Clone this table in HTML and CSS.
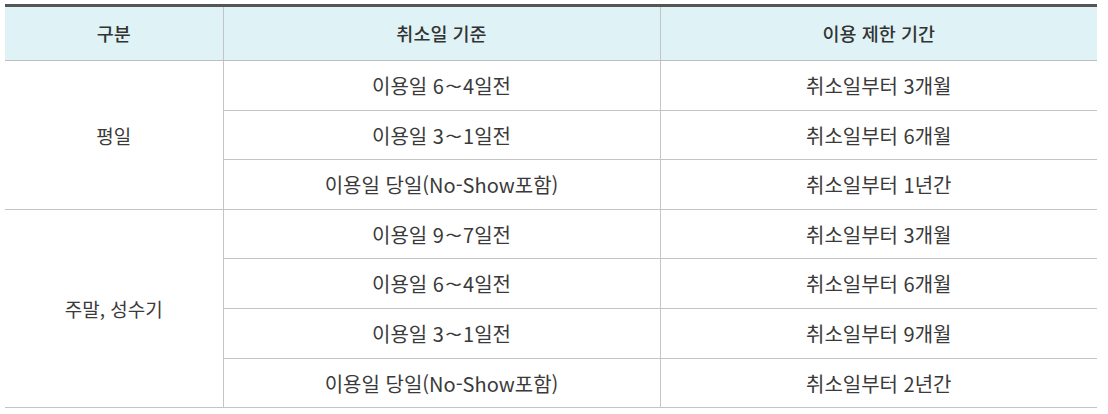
FILE: index.html
```html
<!DOCTYPE html>
<html lang="ko">
<head>
<meta charset="utf-8">
<link rel="stylesheet" href="styles.css">
</head>
<body>
<div class="wrap">
<table class="tbl">
  <colgroup>
    <col class="c1"><col class="c2"><col class="c3">
  </colgroup>
  <thead>
    <tr><th>구분</th><th>취소일 기준</th><th>이용 제한 기간</th></tr>
  </thead>
  <tbody>
    <tr><td rowspan="3" class="grp">평일</td><td>이용일 6<span class="tl">~</span>4일전</td><td>취소일부터 3개월</td></tr>
    <tr><td>이용일 3<span class="tl">~</span>1일전</td><td>취소일부터 6개월</td></tr>
    <tr><td>이용일 당일(No-Show포함)</td><td>취소일부터 1년간</td></tr>
    <tr><td rowspan="4" class="grp">주말, 성수기</td><td>이용일 9<span class="tl">~</span>7일전</td><td>취소일부터 3개월</td></tr>
    <tr><td>이용일 6<span class="tl">~</span>4일전</td><td>취소일부터 6개월</td></tr>
    <tr><td>이용일 3<span class="tl">~</span>1일전</td><td>취소일부터 9개월</td></tr>
    <tr><td>이용일 당일(No-Show포함)</td><td>취소일부터 2년간</td></tr>
  </tbody>
</table>
</div>
</body>
</html>
```

FILE: styles.css
```css
html, body {
  margin: 0;
  padding: 0;
  background: #fff;
}
.wrap {
  padding: 4px 11px 0 5px;
}
.tbl {
  width: 1092px;
  border-collapse: collapse;
  table-layout: fixed;
  border-top: 3px solid #555;
  border-bottom: 1px solid #bdbdbd;
  font-family: "Noto Sans CJK KR", "Noto Sans", sans-serif;
  font-size: 20px;
  color: #3a3a3a;
}
.c1 { width: 218px; }
.c2 { width: 437px; }
.c3 { width: 437px; }
.tbl th {
  background: #dff3f6;
  font-weight: 500;
  font-size: 18.5px;
  line-height: 25px;
  padding: 14px 0;
  text-align: center;
  border-left: 1px solid #c4c4c4;
  border-bottom: 1px solid #bdbdbd;
  color: #333;
}
.tbl td {
  line-height: 25px;
  padding: 12px 0 11.6px;
  text-align: center;
  border-left: 1px solid #c4c4c4;
  border-bottom: 1px solid #c4c4c4;
}
.tbl td.grp {
  font-size: 19px;
}
.tl {
  display: inline-block;
  transform: scaleX(1.6);
  margin: 0 4px;
}
.tbl th:first-child,
.tbl td:first-child[rowspan] {
  border-left: none;
}
```
